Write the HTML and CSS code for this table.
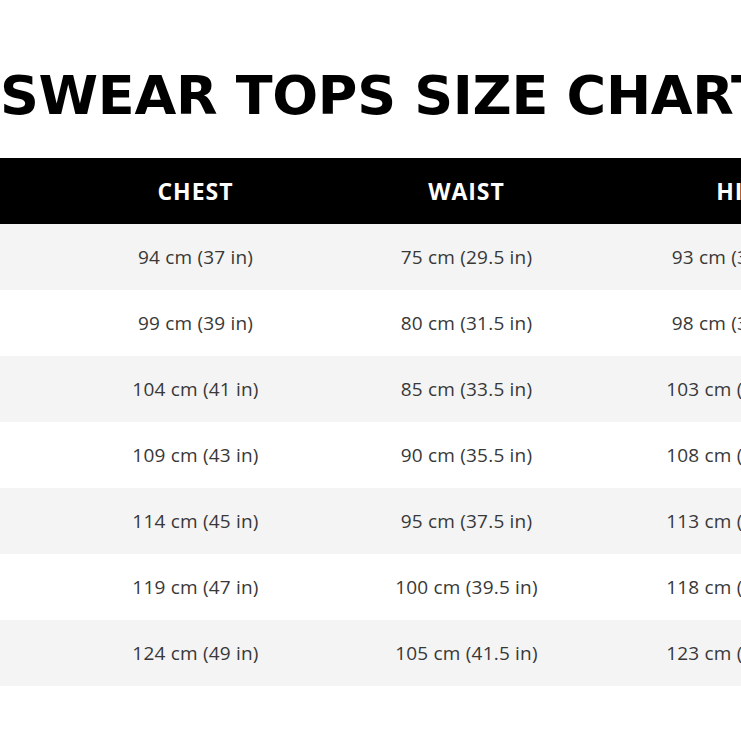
FILE: index.html
```html
<!DOCTYPE html>
<html>
<head>
<meta charset="utf-8">
<link rel="stylesheet" href="styles.css">
</head>
<body>
<div class="page">
  <h1 class="title">SWEAR TOPS SIZE CHART</h1>
  <div class="chart">
    <div class="row head">
      <div class="cell"></div><div class="cell">CHEST</div><div class="cell">WAIST</div><div class="cell">HIP</div>
    </div>
    <div class="row alt"><div class="cell">XS</div><div class="cell">94 cm (37 in)</div><div class="cell">75 cm (29.5 in)</div><div class="cell">93 cm (36.5 in)</div></div>
    <div class="row"><div class="cell">S</div><div class="cell">99 cm (39 in)</div><div class="cell">80 cm (31.5 in)</div><div class="cell">98 cm (38.5 in)</div></div>
    <div class="row alt"><div class="cell">M</div><div class="cell">104 cm (41 in)</div><div class="cell">85 cm (33.5 in)</div><div class="cell">103 cm (40.5 in)</div></div>
    <div class="row"><div class="cell">L</div><div class="cell">109 cm (43 in)</div><div class="cell">90 cm (35.5 in)</div><div class="cell">108 cm (42.5 in)</div></div>
    <div class="row alt"><div class="cell">XL</div><div class="cell">114 cm (45 in)</div><div class="cell">95 cm (37.5 in)</div><div class="cell">113 cm (44.5 in)</div></div>
    <div class="row"><div class="cell">XXL</div><div class="cell">119 cm (47 in)</div><div class="cell">100 cm (39.5 in)</div><div class="cell">118 cm (46.5 in)</div></div>
    <div class="row alt"><div class="cell">3XL</div><div class="cell">124 cm (49 in)</div><div class="cell">105 cm (41.5 in)</div><div class="cell">123 cm (48.5 in)</div></div>
  </div>
</div>
</body>
</html>
```
FILE: styles.css
```css
html, body {
  margin: 0;
  padding: 0;
  background: #ffffff;
}
.page {
  width: 741px;
  height: 741px;
  overflow: hidden;
  font-family: "Open Sans", "DejaVu Sans", sans-serif;
}
.title {
  margin: 0;
  padding-top: 67px;
  height: 158px;
  box-sizing: border-box;
  font-family: "DejaVu Sans", sans-serif;
  font-size: 54px;
  line-height: 57px;
  font-weight: 700;
  color: #000;
  white-space: nowrap;
  letter-spacing: -0.3px;
}
.chart {
  width: 900px;
}
.row {
  display: grid;
  grid-template-columns: 60px 271px 271px 271px;
  height: 66px;
  align-items: center;
  background: #fff;
}
.row.alt {
  background: #f4f4f4;
}
.cell {
  text-align: center;
  font-size: 19px;
  letter-spacing: 0.2px;
  color: #383838;
}
.row:not(.head) .cell:first-child {
  visibility: hidden;
}
.row.head {
  background: #000;
}
.row.head .cell {
  color: #fff;
  font-weight: 700;
  font-size: 23px;
  letter-spacing: 1px;
}
```
